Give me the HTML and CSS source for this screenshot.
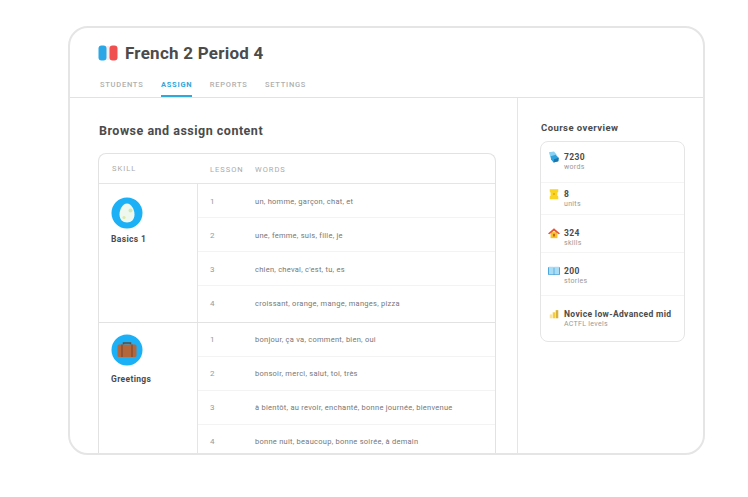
FILE: index.html
```html
<!DOCTYPE html>
<html lang="en">
<head>
<meta charset="utf-8">
<title>French 2 Period 4</title>
<link rel="stylesheet" href="styles.css">
</head>
<body>
<main class="card">
  <header class="head">
    <div class="title-row">
      <svg class="flag" viewBox="0 0 20 16" aria-hidden="true">
        <rect x="8" y="1" width="4" height="14" fill="#f6eeee"/>
        <rect x="0.5" y="0.5" width="8" height="15" rx="3" fill="#2aa7e6"/>
        <rect x="11.500" y="0.5" width="8" height="15" rx="3" fill="#f0504f"/>
      </svg>
      <h1 class="title">French 2 Period 4</h1>
    </div>
    <nav class="tabs">
      <span class="tab">STUDENTS</span>
      <span class="tab tab-active">ASSIGN</span>
      <span class="tab">REPORTS</span>
      <span class="tab">SETTINGS</span>
    </nav>
  </header>
  <div class="body">
    <section class="main">
      <h2 class="heading">Browse and assign content</h2>
      <div class="table">
        <div class="thead">
          <span class="th th-skill">SKILL</span>
          <span class="th th-lesson">LESSON</span>
          <span class="th th-words">WORDS</span>
        </div>
        <div class="group">
          <div class="skill">
            <svg class="skill-icon" viewBox="0 0 32 32" aria-hidden="true">
              <circle cx="16" cy="16" r="15.500" fill="#1cb0f6"/>
              <path d="M16 6.500c4.400 0 7.500 6 7.500 11 0 5-3.200 8-7.500 8s-7.500-3-7.500-8C8.500 12.500 11.600 6.500 16 6.500z" fill="#eef8ef"/>
              <circle cx="19.500" cy="13.500" r="2" fill="#cfe9b8"/>
              <circle cx="13" cy="20.500" r="1.600" fill="#dce9a8"/>
            </svg>
            <span class="skill-name skill-name-near">Basics 1</span>
          </div>
          <div class="rows">
            <div class="row"><span class="num">1</span><span class="words">un, homme, garçon, chat, et</span></div>
            <div class="row"><span class="num">2</span><span class="words">une, femme, suis, fille, je</span></div>
            <div class="row"><span class="num">3</span><span class="words">chien, cheval, c'est, tu, es</span></div>
            <div class="row"><span class="num">4</span><span class="words">croissant, orange, mange, manges, pizza</span></div>
          </div>
        </div>
        <div class="group group-last">
          <div class="skill skill-second">
            <svg class="skill-icon" viewBox="0 0 32 32" aria-hidden="true">
              <circle cx="16" cy="16" r="15.500" fill="#1cb0f6"/>
              <path d="M12.500 10.500V9h7v1.500" fill="none" stroke="#5b4a3d" stroke-width="1.500"/>
              <rect x="6.500" y="10.500" width="19" height="12.500" rx="1.500" fill="#b5673c"/>
              <path d="M11 10.500V23M21 10.500V23" stroke="#8f4e2c" stroke-width="1.500"/>
            </svg>
            <span class="skill-name">Greetings</span>
          </div>
          <div class="rows">
            <div class="row"><span class="num">1</span><span class="words">bonjour, ça va, comment, bien, oui</span></div>
            <div class="row"><span class="num">2</span><span class="words">bonsoir, merci, salut, toi, très</span></div>
            <div class="row"><span class="num">3</span><span class="words">à bientôt, au revoir, enchanté, bonne journée, bienvenue</span></div>
            <div class="row"><span class="num">4</span><span class="words">bonne nuit, beaucoup, bonne soirée, à demain</span></div>
          </div>
        </div>
      </div>
    </section>
    <aside class="side">
      <h3 class="side-title">Course overview</h3>
      <div class="stats">
        <div class="stat stat-a">
          <svg class="stat-icon" viewBox="0 0 14 14" aria-hidden="true">
            <path d="M1 1.500 7 .5l3 3.500-1 3-6 .5z" fill="#8ad0f2"/>
            <path d="M3 6 9 4.500 12.500 8 12 12 6.500 13.500 3.500 10z" fill="#2ea3de"/>
            <path d="M6.500 13.500 12 12 12.500 8 7 9.500z" fill="#1a76ad"/>
          </svg>
          <div><div class="stat-num">7230</div><div class="stat-label">words</div></div>
        </div>
        <div class="stat stat-b">
          <svg class="stat-icon" viewBox="0 0 14 14" aria-hidden="true">
            <path d="M2 1.500h10v2.500L11 5.500v3.500l1 1V13H2v-3l1-1V5.500L2 4z" fill="#f9d423"/>
            <rect x="6" y="6" width="2" height="2" fill="#e0a80f"/>
          </svg>
          <div><div class="stat-num">8</div><div class="stat-label">units</div></div>
        </div>
        <div class="stat stat-c">
          <svg class="stat-icon" viewBox="0 0 14 14" aria-hidden="true">
            <rect x="3" y="6" width="8" height="7" fill="#f7c325"/>
            <path d="M0 7.500 7 1.500l7 6-1.500 1L7 4.500 1.500 8.500z" fill="#e5533a"/>
            <rect x="5.800" y="8" width="2.400" height="3" fill="#c9651e"/>
          </svg>
          <div><div class="stat-num">324</div><div class="stat-label">skills</div></div>
        </div>
        <div class="stat stat-d">
          <svg class="stat-icon" viewBox="0 0 14 12" aria-hidden="true">
            <path d="M0 1.500h6.500L7 2.500l.5-1H14V10.500H7.500L7 11l-.5-.5H0z" fill="#3f9fd8"/>
            <path d="M1 1h5.600v8.500H1zM7.400 1H13v8.500H7.400z" fill="#a9dcf5"/>
          </svg>
          <div><div class="stat-num">200</div><div class="stat-label">stories</div></div>
        </div>
        <div class="stat stat-e">
          <svg class="stat-icon" viewBox="0 0 14 14" aria-hidden="true">
            <rect x="2" y="7.500" width="3" height="4.500" fill="#fbe29a"/>
            <rect x="5.500" y="5" width="3" height="7" fill="#f7cd3c"/>
            <rect x="9" y="2.500" width="3" height="9.500" fill="#d9b23a"/>
          </svg>
          <div><div class="stat-num">Novice low-Advanced mid</div><div class="stat-label">ACTFL levels</div></div>
        </div>
      </div>
    </aside>
  </div>
</main>
</body>
</html>
```
FILE: styles.css
```css
* { box-sizing: border-box; }
html, body { margin: 0; padding: 0; background: #fff; }
body {
  width: 748px;
  height: 497px;
  overflow: hidden;
  padding: 26px 43px 42px 68px;
  font-family: "Roboto", "Liberation Sans", sans-serif;
  color: #4b4b4b;
}
.card {
  width: 637px;
  height: 429px;
  border: 2px solid #e5e5e5;
  border-radius: 20px;
  overflow: hidden;
  display: flex;
  flex-direction: column;
  background: #fff;
}
.head {
  height: 70px;
  flex: none;
  border-bottom: 1px solid #e2e2e2;
  display: flex;
  flex-direction: column;
}
.title-row {
  display: flex;
  align-items: center;
  gap: 7px;
  height: 33px;
  margin-top: 8px;
  padding-left: 28px;
}
.flag { width: 20px; height: 16px; flex: none; }
.title {
  margin: 0;
  font-size: 17px;
  font-weight: 700;
  letter-spacing: 0.25px;
  color: #4b4b4b;
}
.tabs {
  display: flex;
  gap: 17.500px;
  margin-top: auto;
  padding-left: 30px;
  height: 27px;
}
.tab {
  font-size: 7.500px;
  font-weight: 500;
  letter-spacing: 0.75px;
  line-height: 27px;
  padding-top: 1px;
  color: #afafaf;
  height: 27px;
}
.tab-active {
  color: #2fa8dc;
  font-weight: 700;
  border-bottom: 2px solid #2fa8dc;
}
.body { flex: 1; min-height: 0; display: flex; }
.main {
  width: 448px;
  flex: none;
  border-right: 1px solid #e5e5e5;
  padding: 0 20px 0 28px;
  overflow: hidden;
}
.heading {
  margin: 25px 0 14px 1px;
  font-size: 12.500px;
  line-height: 16px;
  font-weight: 700;
  letter-spacing: 0.5px;
  color: #4b4b4b;
}
.table {
  width: 398px;
  border: 1px solid #e2e2e2;
  border-bottom: 0;
  border-radius: 8px 8px 0 0;
}
.thead {
  display: flex;
  align-items: center;
  height: 30px;
  border-bottom: 1px solid #e5e5e5;
}
.th {
  font-size: 7.500px;
  font-weight: 400;
  letter-spacing: 1px;
  color: #aaa;
}
.th-skill { width: 111px; padding-left: 13px; }
.th-lesson { width: 45px; margin-top: 1px; }
.th-words { margin-top: 1px; }
.group { display: flex; border-bottom: 1px solid #e2e2e2; }
.group-last { border-bottom: 0; }
.skill {
  width: 99px;
  flex: none;
  border-right: 1px solid #e5e5e5;
  padding: 13px 0 0 12px;
  display: flex;
  flex-direction: column;
}
.skill-second { padding-top: 11px; }
.skill-icon { width: 32px; height: 32px; display: block; }
.skill-name {
  margin-top: 8px;
  font-size: 8.500px;
  line-height: 10px;
  font-weight: 700;
  letter-spacing: 0.35px;
  color: #4b4b4b;
}
.skill-name-near { margin-top: 5px; }
.rows { flex: 1; padding-bottom: 2px; }
.row {
  height: 34px;
  display: flex;
  align-items: center;
  padding-top: 1px;
  border-bottom: 1px solid #f3f3f3;
}
.row:last-child { border-bottom: 0; }
.group-last .row { padding-top: 0; padding-bottom: 1px; }
.num {
  width: 57px;
  padding-left: 12px;
  font-size: 8px;
  color: #999;
}
.words {
  font-size: 7.500px;
  letter-spacing: 0.26px;
  color: #777;
  white-space: nowrap;
}
.side { flex: 1; padding: 24px 18px 0 23px; }
.side-title {
  margin: 0 0 7px;
  font-size: 9.500px;
  line-height: 12px;
  font-weight: 700;
  letter-spacing: 0.43px;
  color: #4b4b4b;
}
.stats {
  width: 145px;
  height: 201px;
  margin-left: -1px;
  border: 1px solid #e5e5e5;
  border-radius: 8px;
  display: flex;
  flex-direction: column;
}
.stat {
  display: flex;
  align-items: center;
  gap: 4px;
  padding-left: 7px;
  border-bottom: 1px solid #f4f4f4;
}
.stat:last-child { border-bottom: 0; }
.stat-a { height: 41px; padding-bottom: 1px; }
.stat-b { height: 32px; }
.stat-c { height: 38px; padding-top: 8px; }
.stat-d { height: 43px; padding-top: 3px; }
.stat-e { flex: 1; }
.stat-icon { width: 12px; height: 12px; flex: none; margin-bottom: 9px; }
.stat-num {
  font-size: 8.500px;
  line-height: 10px;
  font-weight: 700;
  letter-spacing: 0.35px;
  color: #4b4b4b;
  white-space: nowrap;
}
.stat-label {
  margin-top: 1px;
  font-size: 7px;
  line-height: 9px;
  letter-spacing: 0.3px;
  color: #999;
  white-space: nowrap;
}
```
